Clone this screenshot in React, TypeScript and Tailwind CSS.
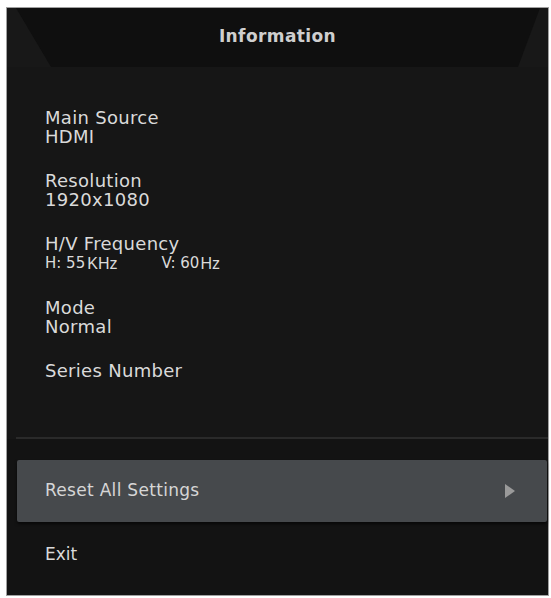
export default function App() {
  const items = [
    { label: "Main Source", value: "HDMI" },
    { label: "Resolution", value: "1920x1080" },
    { label: "H/V Frequency", value: null },
    { label: "Mode", value: "Normal" },
    { label: "Series Number", value: "" },
  ];

  return (
    <div className="w-[551px] h-[598px] bg-white pt-[7px] pl-[6px] font-['DejaVu_Sans',sans-serif]">
      <div className="w-[543px] h-[589px] border border-[#a0a0a0] bg-[#161616] flex flex-col">
        {/* header */}
        <div className="h-[59px] bg-[#181818]">
          <div className="h-full bg-[#0f0f0f] [clip-path:polygon(9px_0,calc(100%-8px)_0,calc(100%-30px)_100%,44px_100%)] flex items-center justify-center pb-[2px]">
            <span className="text-[17px] font-bold text-[#cfcfcf] tracking-[0.4px]">
              Information
            </span>
          </div>
        </div>

        {/* info list */}
        <div className="h-[370px] pl-[38px] pt-[41px] flex flex-col gap-[25px] text-[18px] leading-[19px] text-[#dadada] tracking-[0.3px]">
          {items.map((item) => (
            <div key={item.label} className="flex flex-col">
              <span>{item.label}</span>
              {item.value === null ? (
                <div className="flex items-center text-[15px] leading-[19px] pt-[1px] tracking-normal">
                  <span>H: 55</span>
                  <span className="ml-[2px] text-[16px] font-['Liberation_Sans',sans-serif]">KHz</span>
                  <span className="ml-[44px]">V: 60</span>
                  <span className="ml-[1px] text-[16px] font-['Liberation_Sans',sans-serif]">Hz</span>
                </div>
              ) : item.value ? (
                <span>{item.value}</span>
              ) : null}
            </div>
          ))}
        </div>

        {/* divider */}
        <div className="ml-[9px] h-[2px] bg-[#2a2a2a]" />

        {/* bottom menu */}
        <div className="flex-1 bg-[#131313] pt-[21px]">
          <div className="ml-[10px] mr-[1px] h-[62px] bg-[#46494c] rounded-[2px] flex items-center justify-between pl-[28px] pr-[32px] shadow-[0_2px_3px_rgba(0,0,0,0.6)]">
            <span className="text-[17px] text-[#d6d6d6] tracking-[0.3px]">Reset All Settings</span>
            <svg width="10" height="14" viewBox="0 0 10 14">
              <path d="M0 0 L10 7 L0 14 Z" fill="#9a9a9a" />
            </svg>
          </div>
          <div className="h-[66px] flex items-center pl-[38px]">
            <span className="text-[17px] text-[#dadada]">Exit</span>
          </div>
        </div>
      </div>
    </div>
  );
}
